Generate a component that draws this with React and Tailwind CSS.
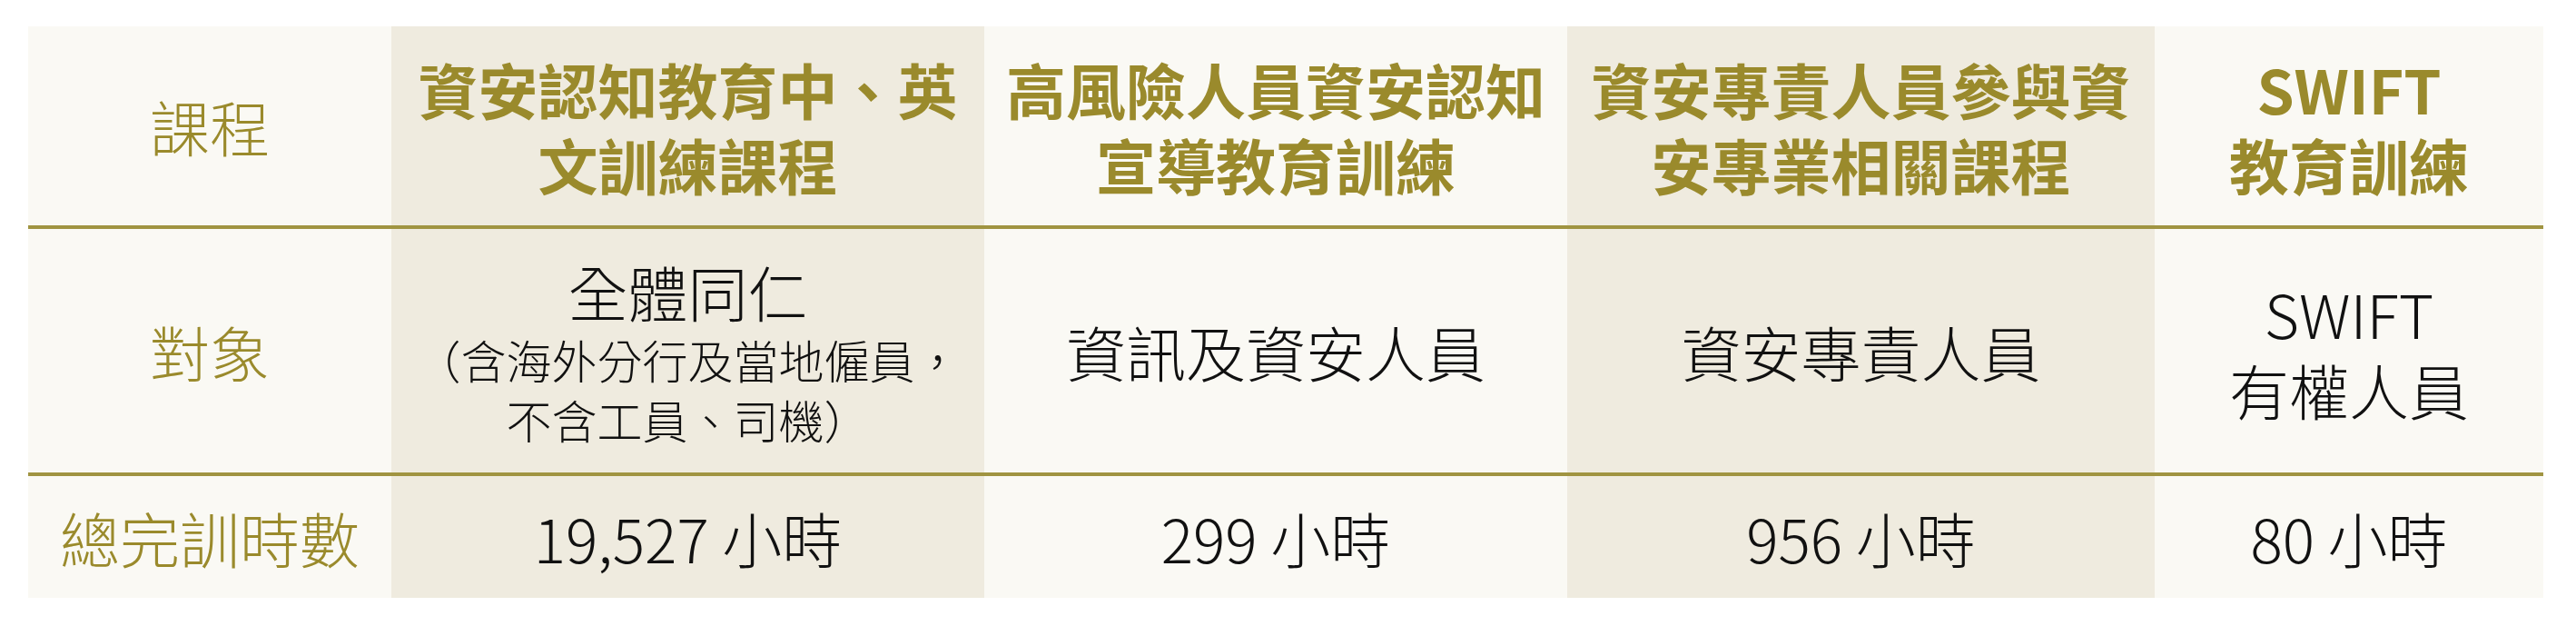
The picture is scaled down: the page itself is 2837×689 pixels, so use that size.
const GOLD = 'text-[#9a8a2c]'

const COLS = [
  'bg-[#faf9f4]',
  'bg-[#efebdf]',
  'bg-[#faf9f4]',
  'bg-[#efebdf]',
  'bg-[#faf9f4]',
]

const HEADERS = [
  ['資安認知教育中、英', '文訓練課程'],
  ['高風險人員資安認知', '宣導教育訓練'],
  ['資安專責人員參與資', '安專業相關課程'],
  ['SWIFT', '教育訓練'],
]

const HOURS = ['19,527 小時', '299 小時', '956 小時', '80 小時']

function Rule() {
  return <div className="col-span-5 h-[4px] bg-[#a09441]" />
}

function Label({ bg, children }) {
  return (
    <div className={`${bg} flex items-center justify-center font-light text-[66px] ${GOLD}`}>
      {children}
    </div>
  )
}

export default function App() {
  return (
    <div
      className="w-[2837px] h-[689px] bg-white pl-[31px] pt-[29px]"
      style={{ fontFamily: '"Noto Sans CJK TC", "Noto Sans", sans-serif' }}
    >
      <div className="grid w-[2770px] grid-cols-[400px_653px_642px_647px_428px] grid-rows-[219px_4px_268px_4px_134px]">
        {/* 課程 */}
        <Label bg={COLS[0]}>課程</Label>
        {HEADERS.map(([a, b], i) => (
          <div key={i} className={`${COLS[i + 1]} flex items-center justify-center`}>
            <p className={`text-center font-bold text-[66px] leading-[83px] ${GOLD}`}>
              {a}<br />{b}
            </p>
          </div>
        ))}

        <Rule />

        {/* 對象 */}
        <Label bg={COLS[0]}>對象</Label>
        <div className={`${COLS[1]} flex items-center justify-center`}>
          <p className="text-center font-light text-[#111] text-[50px] leading-[66px]">
            <span className="text-[66px] leading-[84px]">全體同仁</span><br />
            （含海外分行及當地僱員，<br />
            不含工員、司機）
          </p>
        </div>
        <div className={`${COLS[2]} flex items-center justify-center font-light text-[66px] text-[#111]`}>
          資訊及資安人員
        </div>
        <div className={`${COLS[3]} flex items-center justify-center font-light text-[66px] text-[#111]`}>
          資安專責人員
        </div>
        <div className={`${COLS[4]} flex items-center justify-center`}>
          <p className="text-center font-light text-[66px] leading-[84px] text-[#111]">
            SWIFT<br />有權人員
          </p>
        </div>

        <Rule />

        {/* 總完訓時數 */}
        <Label bg={COLS[0]}>總完訓時數</Label>
        {HOURS.map((h, i) => (
          <div
            key={h}
            className={`${COLS[i + 1]} flex items-center justify-center font-light text-[66px] text-[#111]`}
          >
            {h}
          </div>
        ))}
      </div>
    </div>
  )
}
